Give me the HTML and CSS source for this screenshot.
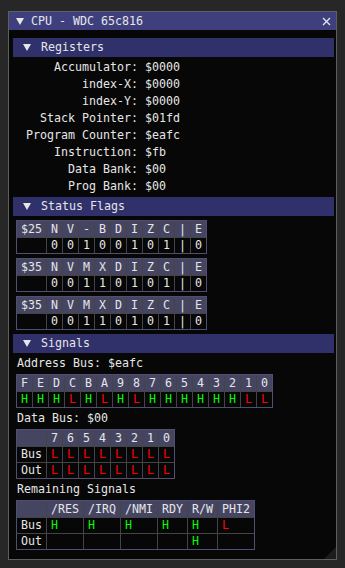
FILE: index.html
```html
<!DOCTYPE html>
<html>

<head>
    <meta charset="utf-8" />
    <meta name="viewport" content="width=device-width, initial-scale=1" />
    <title>CPU - WDC 65c816</title>
    <link rel="stylesheet" href="styles.css">
</head>

<body>
    <div class="window">
        <div class="titlebar">
            <span class="arrow"></span>
            <span class="title">CPU - WDC 65c816</span>
            <svg class="close" width="9" height="9" viewBox="0 0 9 9">
                <path d="M1 1 L8 8 M8 1 L1 8" stroke="#e6e6e6" stroke-width="1.3" fill="none" />
            </svg>
        </div>

        <div class="content">
            <div class="header"><span class="arrow"></span><span>Registers</span></div>
            <div class="section">
                <div class="regs">
                    <span class="lbl">Accumulator:</span><span>$0000</span>
                    <span class="lbl">index-X:</span><span>$0000</span>
                    <span class="lbl">index-Y:</span><span>$0000</span>
                    <span class="lbl">Stack Pointer:</span><span>$01fd</span>
                    <span class="lbl">Program Counter:</span><span>$eafc</span>
                    <span class="lbl">Instruction:</span><span>$fb</span>
                    <span class="lbl">Data Bank:</span><span>$00</span>
                    <span class="lbl">Prog Bank:</span><span>$00</span>
                </div>
            </div>

            <div class="header"><span class="arrow"></span><span>Status Flags</span></div>
            <div class="section">
                <div class="tbl cols-11">
                    <span class="th">$25</span><span class="th">N</span><span class="th">V</span><span class="th">-</span><span class="th">B</span><span class="th">D</span><span class="th">I</span><span class="th">Z</span><span class="th">C</span><span class="th">|</span><span class="th">E</span>
                    <span></span><span>0</span><span>0</span><span>1</span><span>0</span><span>0</span><span>1</span><span>0</span><span>1</span><span>|</span><span>0</span>
                </div>
                <div class="tbl cols-11">
                    <span class="th">$35</span><span class="th">N</span><span class="th">V</span><span class="th">M</span><span class="th">X</span><span class="th">D</span><span class="th">I</span><span class="th">Z</span><span class="th">C</span><span class="th">|</span><span class="th">E</span>
                    <span></span><span>0</span><span>0</span><span>1</span><span>1</span><span>0</span><span>1</span><span>0</span><span>1</span><span>|</span><span>0</span>
                </div>
                <div class="tbl cols-11">
                    <span class="th">$35</span><span class="th">N</span><span class="th">V</span><span class="th">M</span><span class="th">X</span><span class="th">D</span><span class="th">I</span><span class="th">Z</span><span class="th">C</span><span class="th">|</span><span class="th">E</span>
                    <span></span><span>0</span><span>0</span><span>1</span><span>1</span><span>0</span><span>1</span><span>0</span><span>1</span><span>|</span><span>0</span>
                </div>
            </div>

            <div class="header"><span class="arrow"></span><span>Signals</span></div>
            <div class="section">
                <div class="line">Address Bus: $eafc</div>
                <div class="tbl cols-16">
                    <span class="th">F</span><span class="th">E</span><span class="th">D</span><span class="th">C</span><span class="th">B</span><span class="th">A</span><span class="th">9</span><span class="th">8</span><span class="th">7</span><span class="th">6</span><span class="th">5</span><span class="th">4</span><span class="th">3</span><span class="th">2</span><span class="th">1</span><span class="th">0</span>
                    <span class="hi">H</span><span class="hi">H</span><span class="hi">H</span><span class="lo">L</span><span class="hi">H</span><span class="lo">L</span><span class="hi">H</span><span class="lo">L</span><span class="hi">H</span><span class="hi">H</span><span class="hi">H</span><span class="hi">H</span><span class="hi">H</span><span class="hi">H</span><span class="lo">L</span><span class="lo">L</span>
                </div>

                <div class="line">Data Bus: $00</div>
                <div class="tbl cols-9">
                    <span class="th"></span><span class="th">7</span><span class="th">6</span><span class="th">5</span><span class="th">4</span><span class="th">3</span><span class="th">2</span><span class="th">1</span><span class="th">0</span>
                    <span>Bus</span><span class="lo">L</span><span class="lo">L</span><span class="lo">L</span><span class="lo">L</span><span class="lo">L</span><span class="lo">L</span><span class="lo">L</span><span class="lo">L</span>
                    <span>Out</span><span class="lo">L</span><span class="lo">L</span><span class="lo">L</span><span class="lo">L</span><span class="lo">L</span><span class="lo">L</span><span class="lo">L</span><span class="lo">L</span>
                </div>

                <div class="line">Remaining Signals</div>
                <div class="tbl cols-7">
                    <span class="th"></span><span class="th">/RES</span><span class="th">/IRQ</span><span class="th">/NMI</span><span class="th">RDY</span><span class="th">R/W</span><span class="th">PHI2</span>
                    <span>Bus</span><span class="hi">H</span><span class="hi">H</span><span class="hi">H</span><span class="hi">H</span><span class="hi">H</span><span class="lo">L</span>
                    <span>Out</span><span></span><span></span><span></span><span></span><span class="hi">H</span><span></span>
                </div>
            </div>
        </div>

        <span class="grip"></span>
    </div>
</body>

</html>
```

FILE: styles.css
```css
body {
    margin: 0;
    background: #272727;
    font-family: "DejaVu Sans Mono", "Liberation Mono", monospace;
    font-size: 11.63px;
    line-height: 13px;
    color: #e6e6e6;
}

.window {
    position: relative;
    box-sizing: border-box;
    width: 329px;
    height: 549px;
    margin: 11px 0 0 8px;
    border: 1px solid #5f5f5f;
    background: #070707;
}

.titlebar {
    display: flex;
    align-items: center;
    height: 18px;
    padding: 0 5px 0 7px;
    background: #3f3f7e;
}

.titlebar .title {
    flex: 1;
    margin-left: 7px;
    line-height: 18px;
}

.close {
    display: block;
}

.arrow {
    display: inline-block;
    width: 0;
    height: 0;
    border-left: 4px solid transparent;
    border-right: 4px solid transparent;
    border-top: 7px solid #e6e6e6;
}

.content {
    display: flex;
    flex-direction: column;
    gap: 4px;
    padding: 8px 2px 0 4px;
}

.header {
    display: flex;
    align-items: center;
    gap: 10px;
    height: 19px;
    padding-left: 10px;
    background: #30306a;
}

.section {
    display: flex;
    flex-direction: column;
    align-items: flex-start;
    gap: 4px;
    padding-left: 3px;
}

.regs {
    display: grid;
    grid-template-columns: 122px auto;
    column-gap: 7px;
    row-gap: 4px;
}

.regs .lbl {
    text-align: right;
}

.line {
    height: 13px;
    padding-left: 1px;
}

.tbl {
    display: inline-grid;
    gap: 1px;
    border: 1px solid #4f4f72;
    background: #434348;
}

.cols-7 { grid-template-columns: repeat(7, auto); }
.cols-9 { grid-template-columns: repeat(9, auto); }
.cols-11 { grid-template-columns: repeat(11, auto); }
.cols-16 { grid-template-columns: repeat(16, auto); }

.tbl span {
    padding: 0 4px;
    line-height: 15px;
    min-height: 15px;
    background: #070707;
}

.tbl .th {
    line-height: 16px;
    background: #454561;
}

.hi {
    color: #00ff00;
}

.lo {
    color: #ff0000;
}

.grip {
    position: absolute;
    right: 0;
    bottom: 0;
    width: 0;
    height: 0;
    border-left: 12px solid transparent;
    border-bottom: 12px solid #1d1d1d;
}
```
